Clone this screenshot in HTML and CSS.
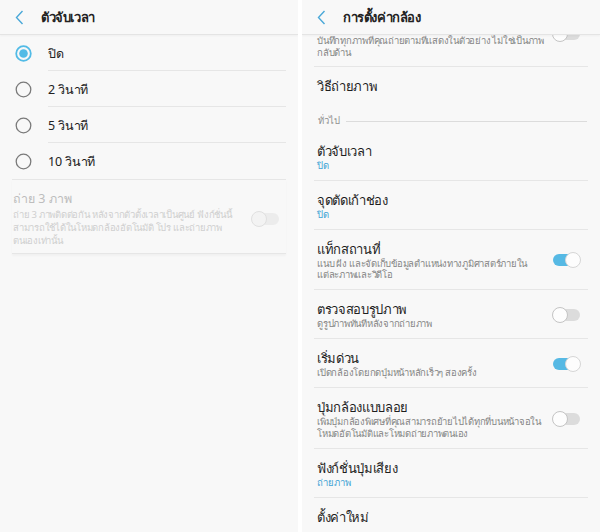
FILE: index.html
```html
<!DOCTYPE html>
<html lang="th">
<head>
    <meta charset="UTF-8">
    <meta name="viewport" content="width=device-width, initial-scale=1.0">
    <title>ตั้งค่ากล้อง</title>
    <link rel="stylesheet" href="styles.css">
</head>
<body>
    <div class="screens">
        <section class="panel">
            <header class="app-bar">
                <svg class="back" width="9" height="15" viewBox="0 0 9 15"><path d="M7.5 1 L1.5 7.5 L7.5 14" fill="none" stroke="#4aa8d8" stroke-width="1.4"/></svg>
                <h1>ตัวจับเวลา</h1>
            </header>
            <div class="radio-list">
                <div class="radio-row">
                    <span class="radio-icon">
                        <svg width="17" height="17" viewBox="0 0 17 17"><circle cx="8.5" cy="8.5" r="7.3" fill="none" stroke="#52bbe6" stroke-width="1.8"/><circle cx="8.5" cy="8.5" r="4.3" fill="#52bbe6"/></svg>
                    </span>
                    <span class="radio-text">ปิด</span>
                </div>
                <div class="radio-row">
                    <span class="radio-icon">
                        <svg width="17" height="17" viewBox="0 0 17 17"><circle cx="8.5" cy="8.5" r="7.3" fill="none" stroke="#7a7a7a" stroke-width="1.3"/></svg>
                    </span>
                    <span class="radio-text">2 วินาที</span>
                </div>
                <div class="radio-row">
                    <span class="radio-icon">
                        <svg width="17" height="17" viewBox="0 0 17 17"><circle cx="8.5" cy="8.5" r="7.3" fill="none" stroke="#7a7a7a" stroke-width="1.3"/></svg>
                    </span>
                    <span class="radio-text">5 วินาที</span>
                </div>
                <div class="radio-row last">
                    <span class="radio-icon">
                        <svg width="17" height="17" viewBox="0 0 17 17"><circle cx="8.5" cy="8.5" r="7.3" fill="none" stroke="#7a7a7a" stroke-width="1.3"/></svg>
                    </span>
                    <span class="radio-text">10 วินาที</span>
                </div>
            </div>
            <div class="burst">
                <div class="burst-text">
                    <div class="burst-title">ถ่าย 3 ภาพ</div>
                    <div class="burst-desc">ถ่าย 3 ภาพติดต่อกัน หลังจากตัวตั้งเวลาเป็นศูนย์ ฟังก์ชั่นนี้สามารถใช้ได้ในโหมดกล้องอัตโนมัติ โปร และถ่ายภาพตนเองเท่านั้น</div>
                </div>
                <span class="switch disabled"><span class="knob"></span></span>
            </div>
        </section>

        <section class="panel">
            <header class="app-bar">
                <svg class="back" width="9" height="15" viewBox="0 0 9 15"><path d="M7.5 1 L1.5 7.5 L7.5 14" fill="none" stroke="#4aa8d8" stroke-width="1.4"/></svg>
                <h1>การตั้งค่ากล้อง</h1>
            </header>
            <div class="settings">
                <div class="item clipped">
                    <div class="item-text">
                        <div class="item-desc">บันทึกทุกภาพที่คุณถ่ายตามที่แสดงในตัวอย่าง ไม่ใช่เป็นภาพกลับด้าน</div>
                    </div>
                    <span class="switch"><span class="knob"></span></span>
                </div>
                <div class="item no-line">
                    <div class="item-text">
                        <div class="item-title">วิธีถ่ายภาพ</div>
                    </div>
                </div>
                <div class="section-head"><span>ทั่วไป</span></div>
                <div class="item">
                    <div class="item-text">
                        <div class="item-title">ตัวจับเวลา</div>
                        <div class="item-value">ปิด</div>
                    </div>
                </div>
                <div class="item">
                    <div class="item-text">
                        <div class="item-title">จุดตัดเก้าช่อง</div>
                        <div class="item-value">ปิด</div>
                    </div>
                </div>
                <div class="item">
                    <div class="item-text">
                        <div class="item-title">แท็กสถานที่</div>
                        <div class="item-desc">แนบ ฝัง และจัดเก็บข้อมูลตำแหน่งทางภูมิศาสตร์ภายในแต่ละภาพและวิดีโอ</div>
                    </div>
                    <span class="switch on"><span class="knob"></span></span>
                </div>
                <div class="item">
                    <div class="item-text">
                        <div class="item-title">ตรวจสอบรูปภาพ</div>
                        <div class="item-desc">ดูรูปภาพทันทีหลังจากถ่ายภาพ</div>
                    </div>
                    <span class="switch"><span class="knob"></span></span>
                </div>
                <div class="item">
                    <div class="item-text">
                        <div class="item-title">เริ่มด่วน</div>
                        <div class="item-desc">เปิดกล้องโดยกดปุ่มหน้าหลักเร็วๆ สองครั้ง</div>
                    </div>
                    <span class="switch on"><span class="knob"></span></span>
                </div>
                <div class="item">
                    <div class="item-text">
                        <div class="item-title">ปุ่มกล้องแบบลอย</div>
                        <div class="item-desc">เพิ่มปุ่มกล้องพิเศษที่คุณสามารถย้ายไปได้ทุกที่บนหน้าจอในโหมดอัตโนมัติและโหมดถ่ายภาพตนเอง</div>
                    </div>
                    <span class="switch"><span class="knob"></span></span>
                </div>
                <div class="item">
                    <div class="item-text">
                        <div class="item-title">ฟังก์ชั่นปุ่มเสียง</div>
                        <div class="item-value">ถ่ายภาพ</div>
                    </div>
                </div>
                <div class="item no-line">
                    <div class="item-text">
                        <div class="item-title">ตั้งค่าใหม่</div>
                    </div>
                </div>
            </div>
        </section>
    </div>
</body>
</html>
```

FILE: styles.css
```css
html, body {
    margin: 0;
    height: 100%;
    background: #fff;
}
body {
    font-family: "Noto Sans", Roboto, sans-serif;
    color: #222;
    overflow: hidden;
}
.screens {
    display: flex;
    gap: 4px;
    height: 532px;
}
.panel {
    flex: 1;
    background: #f8f8f8;
    display: flex;
    flex-direction: column;
    overflow: hidden;
}
.app-bar {
    position: relative;
    z-index: 2;
    height: 34px;
    display: flex;
    align-items: center;
    background: #f8f8f8;
    border-bottom: 1px solid #e4e4e4;
    box-shadow: 0 1px 2px rgba(0,0,0,0.04);
    flex-shrink: 0;
}
.back {
    margin-left: 15px;
    margin-right: 17px;
}
.app-bar h1 {
    margin: 0;
    font-size: 13px;
    font-weight: 700;
    letter-spacing: -0.4px;
    color: #222;
}

/* left: timer options */
.radio-row {
    display: flex;
    height: 36px;
}
.radio-icon {
    width: 48px;
    display: flex;
    align-items: center;
    justify-content: center;
    padding-right: 2px;
    padding-top: 1px;
    box-sizing: border-box;
}
.radio-text {
    flex: 1;
    display: flex;
    align-items: center;
    margin-right: 12px;
    padding-top: 2px;
    font-size: 12.5px;
    letter-spacing: -0.2px;
    border-bottom: 1px solid #e6e6e6;
}
.radio-row.last .radio-text {
    border-bottom: none;
}
.burst {
    margin: 0 12px;
    border-top: 1px solid #e6e6e6;
    border-bottom: 1px solid #e6e6e6;
    box-shadow: 0 2px 2px rgba(0,0,0,0.03);
    padding: 10px 7px 6px 1px;
    display: flex;
    align-items: center;
}
.burst-text {
    flex: 1;
    padding-right: 20px;
}
.burst-title {
    font-size: 12.5px;
    line-height: 18px;
    color: #bdbdbd;
}
.burst-desc {
    font-size: 9.5px;
    line-height: 13px;
    letter-spacing: -0.25px;
    color: #cfcfcf;
}

/* right: camera settings */
.settings {
    display: flex;
    flex-direction: column;
}
.item {
    margin: 0 12px;
    padding: 10px 8px 8.5px 3px;
    display: flex;
    align-items: center;
    border-bottom: 1px solid #e6e6e6;
}
.item.no-line {
    border-bottom: none;
}
.item.clipped {
    padding-top: 0;
    padding-bottom: 7px;
    align-items: flex-start;
}
.item.clipped .item-desc {
    line-height: 12px;
}
.item.clipped .switch {
    margin-top: -7px;
}
.item-text {
    flex: 1;
    padding-right: 8px;
}
.item-title {
    font-size: 13px;
    line-height: 18px;
    letter-spacing: -0.35px;
    color: #1e1e1e;
}
.item-desc {
    font-size: 9.5px;
    line-height: 11.5px;
    letter-spacing: -0.25px;
    color: #858585;
}
.item-value {
    font-size: 9.5px;
    line-height: 11.5px;
    color: #3fa3d4;
}
.section-head {
    margin: 0 13px 0 16px;
    height: 28px;
    padding-top: 10px;
    box-sizing: border-box;
    display: flex;
    align-items: flex-start;
    gap: 6px;
    font-size: 9.5px;
    line-height: 14px;
    color: #909090;
}
.section-head::after {
    content: "";
    flex: 1;
    height: 1px;
    margin-top: 7px;
    background: #dcdcdc;
}

/* switches */
.switch {
    position: relative;
    display: inline-block;
    width: 27px;
    height: 12px;
    border-radius: 6px;
    background: #dcdcdc;
    flex-shrink: 0;
}
.switch .knob {
    position: absolute;
    top: -2px;
    left: -1px;
    width: 14px;
    height: 14px;
    border-radius: 50%;
    background: #fdfdfd;
    border: 1px solid #c4c4c4;
}
.switch.on {
    background: #56b9e4;
}
.switch.on .knob {
    left: auto;
    right: -1px;
    border-color: #d6d6d6;
}
.switch.disabled {
    background: #ececec;
}
.switch.disabled .knob {
    background: #f3f3f3;
    border-color: #e0e0e0;
}
```
